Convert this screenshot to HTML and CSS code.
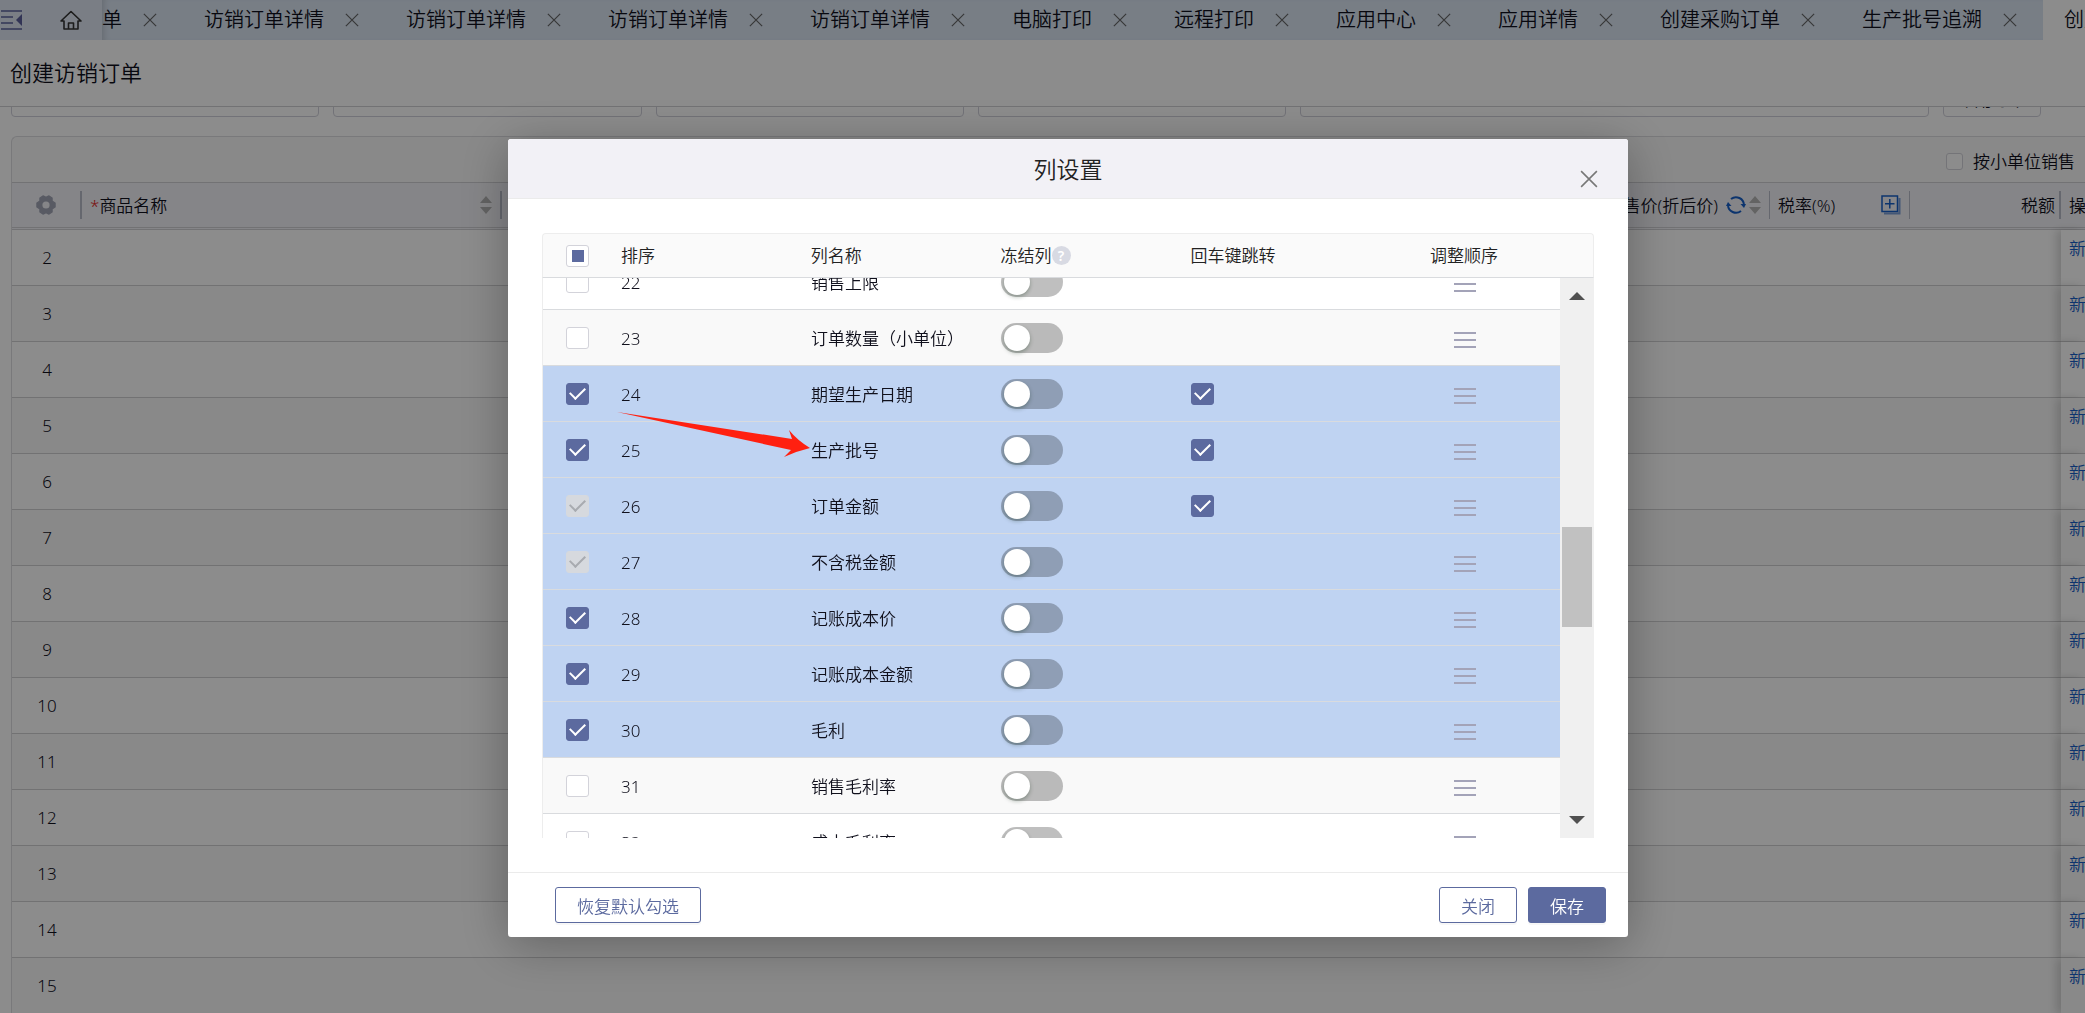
FILE: index.html
```html
<!DOCTYPE html>
<html lang="zh-CN">
<head>
    <meta charset="UTF-8">
    <meta name="viewport" content="width=device-width, initial-scale=1.0">
    <title>创建访销订单</title>
    <link rel="stylesheet" href="styles.css">
</head>
<body>
    <!-- shared icons -->
    <svg class="sprite" aria-hidden="true">
        <symbol id="icon-close" viewBox="0 0 16 16">
            <path d="M1 1L15 15M15 1L1 15" fill="none" stroke="currentColor" stroke-width="1.4"/>
        </symbol>
        <symbol id="icon-drag" viewBox="0 0 22 18">
            <path d="M0 2H22M0 9H22M0 16H22" fill="none" stroke="currentColor" stroke-width="2"/>
        </symbol>
        <symbol id="icon-sort" viewBox="0 0 12 18">
            <path d="M6 0L12 7H0zM6 18L0 11H12z" fill="currentColor"/>
        </symbol>
    </svg>

    <div class="tab-bar">
        <div class="tab-left">
            <button class="icon-btn" aria-label="收起菜单">
                <svg width="22" height="22" viewBox="0 0 22 22">
                    <path d="M1 2H22M1 8H13M1 14H13M1 20H22" fill="none" stroke="#5b609c" stroke-width="1.6"/>
                    <path d="M22 5V17L16 11z" fill="#5b609c"/>
                </svg>
            </button>
            <a href="#" class="home-link" aria-label="首页">
                <svg width="22" height="20" viewBox="0 0 22 20">
                    <path d="M1 11L11 1.500L21 11H18V19H4V11zM8.500 19V13H13.500V19" fill="none" stroke="#333" stroke-width="1.600" stroke-linejoin="round"/>
                </svg>
            </a>
        </div>
        <nav class="tabs">
            <div class="tab tab-cut"><a href="#">单</a><button class="tab-close" aria-label="关闭"><svg><use href="#icon-close"/></svg></button></div>
            <div class="tab"><a href="#">访销订单详情</a><button class="tab-close" aria-label="关闭"><svg><use href="#icon-close"/></svg></button></div>
            <div class="tab"><a href="#">访销订单详情</a><button class="tab-close" aria-label="关闭"><svg><use href="#icon-close"/></svg></button></div>
            <div class="tab"><a href="#">访销订单详情</a><button class="tab-close" aria-label="关闭"><svg><use href="#icon-close"/></svg></button></div>
            <div class="tab"><a href="#">访销订单详情</a><button class="tab-close" aria-label="关闭"><svg><use href="#icon-close"/></svg></button></div>
            <div class="tab"><a href="#">电脑打印</a><button class="tab-close" aria-label="关闭"><svg><use href="#icon-close"/></svg></button></div>
            <div class="tab"><a href="#">远程打印</a><button class="tab-close" aria-label="关闭"><svg><use href="#icon-close"/></svg></button></div>
            <div class="tab"><a href="#">应用中心</a><button class="tab-close" aria-label="关闭"><svg><use href="#icon-close"/></svg></button></div>
            <div class="tab"><a href="#">应用详情</a><button class="tab-close" aria-label="关闭"><svg><use href="#icon-close"/></svg></button></div>
            <div class="tab"><a href="#">创建采购订单</a><button class="tab-close" aria-label="关闭"><svg><use href="#icon-close"/></svg></button></div>
            <div class="tab"><a href="#">生产批号追溯</a><button class="tab-close" aria-label="关闭"><svg><use href="#icon-close"/></svg></button></div>
            <div class="tab active"><a href="#">创建访销订单</a></div>
        </nav>
    </div>

    <header class="page-header">
        <h1>创建访销订单</h1>
    </header>

    <main class="page-main">
        <div class="filters">
            <input type="text" aria-label="筛选一">
            <input type="text" aria-label="筛选二">
            <input type="text" aria-label="筛选三">
            <input type="text" aria-label="筛选四">
            <input type="text" class="wide" aria-label="备注">
            <button class="filter-btn">常用订单</button>
        </div>

        <section class="panel">
            <div class="panel-toolbar">
                <label class="unit-check"><input type="checkbox" class="check check-sm">按小单位销售</label>
            </div>
            <table class="goods-table">
                <colgroup>
                    <col class="col-index">
                    <col class="col-name">
                    <col>
                    <col class="col-rate">
                    <col class="col-tax">
                    <col class="col-action">
                </colgroup>
                <thead>
                    <tr>
                        <th>
                            <div class="th-inner center">
                                <svg width="20" height="20" viewBox="0 0 20 20">
                                    <path d="M7 1L10 2.500L13 1L16 3L16 6L19 8V12L16 14L16 17L13 19L10 17.500L7 19L4 17V14L1 12V8L4 6V3z" fill="#a1a5b5" stroke="#a1a5b5" stroke-width="1.500" stroke-linejoin="round"/>
                                    <circle cx="10" cy="10" r="3.600" fill="#f3f3f8"/>
                                </svg>
                            </div>
                        </th>
                        <th>
                            <div class="th-inner">
                                <span><i class="required">*</i>商品名称</span>
                                <svg class="sort"><use href="#icon-sort"/></svg>
                            </div>
                        </th>
                        <th>
                            <div class="th-inner thin end">
                                <span>售价(折后价)</span>
                                <svg class="refresh" width="20" height="20" viewBox="0 0 20 20">
                                    <path d="M5 4A8 8 0 0 1 18 10M15 16A8 8 0 0 1 2 10" fill="none" stroke="#1760c8" stroke-width="2"/>
                                    <path d="M14.500 9H20L18 13zM5.500 11H0L2 7z" fill="#1760c8"/>
                                </svg>
                                <svg class="sort"><use href="#icon-sort"/></svg>
                            </div>
                        </th>
                        <th>
                            <div class="th-inner thin">
                                <span>税率(%)</span>
                                <svg width="20" height="20" viewBox="0 0 20 20">
                                    <path d="M3 18.500H18.500V3" fill="none" stroke="#7c9fd8" stroke-width="2"/>
                                    <path d="M1 1H16.500V16.500H1zM8.800 4V13.500M4 8.800H13.500" fill="none" stroke="#1760c8" stroke-width="1.500"/>
                                </svg>
                            </div>
                        </th>
                        <th>
                            <div class="th-inner end tight"><span>税额</span></div>
                        </th>
                        <th><div class="th-inner last"><span>操作</span></div></th>
                    </tr>
                </thead>
                <tbody>
                    <tr><td>2</td><td></td><td></td><td></td><td></td><td class="action"><a href="#">新增</a></td></tr>
                    <tr><td>3</td><td></td><td></td><td></td><td></td><td class="action"><a href="#">新增</a></td></tr>
                    <tr><td>4</td><td></td><td></td><td></td><td></td><td class="action"><a href="#">新增</a></td></tr>
                    <tr><td>5</td><td></td><td></td><td></td><td></td><td class="action"><a href="#">新增</a></td></tr>
                    <tr><td>6</td><td></td><td></td><td></td><td></td><td class="action"><a href="#">新增</a></td></tr>
                    <tr><td>7</td><td></td><td></td><td></td><td></td><td class="action"><a href="#">新增</a></td></tr>
                    <tr><td>8</td><td></td><td></td><td></td><td></td><td class="action"><a href="#">新增</a></td></tr>
                    <tr><td>9</td><td></td><td></td><td></td><td></td><td class="action"><a href="#">新增</a></td></tr>
                    <tr><td>10</td><td></td><td></td><td></td><td></td><td class="action"><a href="#">新增</a></td></tr>
                    <tr><td>11</td><td></td><td></td><td></td><td></td><td class="action"><a href="#">新增</a></td></tr>
                    <tr><td>12</td><td></td><td></td><td></td><td></td><td class="action"><a href="#">新增</a></td></tr>
                    <tr><td>13</td><td></td><td></td><td></td><td></td><td class="action"><a href="#">新增</a></td></tr>
                    <tr><td>14</td><td></td><td></td><td></td><td></td><td class="action"><a href="#">新增</a></td></tr>
                    <tr><td>15</td><td></td><td></td><td></td><td></td><td class="action"><a href="#">新增</a></td></tr>
                </tbody>
            </table>
        </section>
    </main>

    <div class="overlay">
        <div class="modal" role="dialog" aria-labelledby="modalTitle">
            <div class="modal-header">
                <h2 id="modalTitle">列设置</h2>
                <button class="modal-close" aria-label="关闭"><svg><use href="#icon-close"/></svg></button>
            </div>

            <div class="modal-body">
                <table class="columns-table columns-head">
                    <colgroup><col class="col-check"><col><col><col><col><col></colgroup>
                    <thead>
                        <tr>
                            <th><input type="checkbox" class="check partial" aria-label="全选"></th>
                            <th>排序</th>
                            <th>列名称</th>
                            <th><span class="with-help">冻结列<span class="help">?</span></span></th>
                            <th>回车键跳转</th>
                            <th class="drag">调整顺序</th>
                        </tr>
                    </thead>
                </table>
                <div class="scroll-area">
                    <div class="scroll-view">
                        <table class="columns-table columns-list">
                            <colgroup><col class="col-check"><col><col><col><col><col></colgroup>
                            <tbody>
                                <tr>
                                    <td><input type="checkbox" class="check" aria-label="销售上限"></td>
                                    <td class="text">22</td>
                                    <td class="text">销售上限</td>
                                    <td><input type="checkbox" class="switch" aria-label="冻结列"></td>
                                    <td></td>
                                    <td class="text drag"><svg><use href="#icon-drag"/></svg></td>
                                </tr>
                                <tr>
                                    <td><input type="checkbox" class="check" aria-label="订单数量（小单位）"></td>
                                    <td class="text">23</td>
                                    <td class="text">订单数量（小单位）</td>
                                    <td><input type="checkbox" class="switch" aria-label="冻结列"></td>
                                    <td></td>
                                    <td class="text drag"><svg><use href="#icon-drag"/></svg></td>
                                </tr>
                                <tr class="selected">
                                    <td><input type="checkbox" class="check" aria-label="期望生产日期" checked></td>
                                    <td class="text">24</td>
                                    <td class="text">期望生产日期</td>
                                    <td><input type="checkbox" class="switch" aria-label="冻结列"></td>
                                    <td><input type="checkbox" class="check" aria-label="回车键跳转" checked></td>
                                    <td class="text drag"><svg><use href="#icon-drag"/></svg></td>
                                </tr>
                                <tr class="selected">
                                    <td><input type="checkbox" class="check" aria-label="生产批号" checked></td>
                                    <td class="text">25</td>
                                    <td class="text">生产批号</td>
                                    <td><input type="checkbox" class="switch" aria-label="冻结列"></td>
                                    <td><input type="checkbox" class="check" aria-label="回车键跳转" checked></td>
                                    <td class="text drag"><svg><use href="#icon-drag"/></svg></td>
                                </tr>
                                <tr class="selected">
                                    <td><input type="checkbox" class="check" aria-label="订单金额" checked disabled></td>
                                    <td class="text">26</td>
                                    <td class="text">订单金额</td>
                                    <td><input type="checkbox" class="switch" aria-label="冻结列"></td>
                                    <td><input type="checkbox" class="check" aria-label="回车键跳转" checked></td>
                                    <td class="text drag"><svg><use href="#icon-drag"/></svg></td>
                                </tr>
                                <tr class="selected">
                                    <td><input type="checkbox" class="check" aria-label="不含税金额" checked disabled></td>
                                    <td class="text">27</td>
                                    <td class="text">不含税金额</td>
                                    <td><input type="checkbox" class="switch" aria-label="冻结列"></td>
                                    <td></td>
                                    <td class="text drag"><svg><use href="#icon-drag"/></svg></td>
                                </tr>
                                <tr class="selected">
                                    <td><input type="checkbox" class="check" aria-label="记账成本价" checked></td>
                                    <td class="text">28</td>
                                    <td class="text">记账成本价</td>
                                    <td><input type="checkbox" class="switch" aria-label="冻结列"></td>
                                    <td></td>
                                    <td class="text drag"><svg><use href="#icon-drag"/></svg></td>
                                </tr>
                                <tr class="selected">
                                    <td><input type="checkbox" class="check" aria-label="记账成本金额" checked></td>
                                    <td class="text">29</td>
                                    <td class="text">记账成本金额</td>
                                    <td><input type="checkbox" class="switch" aria-label="冻结列"></td>
                                    <td></td>
                                    <td class="text drag"><svg><use href="#icon-drag"/></svg></td>
                                </tr>
                                <tr class="selected">
                                    <td><input type="checkbox" class="check" aria-label="毛利" checked></td>
                                    <td class="text">30</td>
                                    <td class="text">毛利</td>
                                    <td><input type="checkbox" class="switch" aria-label="冻结列"></td>
                                    <td></td>
                                    <td class="text drag"><svg><use href="#icon-drag"/></svg></td>
                                </tr>
                                <tr>
                                    <td><input type="checkbox" class="check" aria-label="销售毛利率"></td>
                                    <td class="text">31</td>
                                    <td class="text">销售毛利率</td>
                                    <td><input type="checkbox" class="switch" aria-label="冻结列"></td>
                                    <td></td>
                                    <td class="text drag"><svg><use href="#icon-drag"/></svg></td>
                                </tr>
                                <tr>
                                    <td><input type="checkbox" class="check" aria-label="成本毛利率"></td>
                                    <td class="text">32</td>
                                    <td class="text">成本毛利率</td>
                                    <td><input type="checkbox" class="switch" aria-label="冻结列"></td>
                                    <td></td>
                                    <td class="text drag"><svg><use href="#icon-drag"/></svg></td>
                                </tr>
                            </tbody>
                        </table>
                    </div>
                    <div class="scrollbar">
                        <span class="arrow-up"></span>
                        <div class="track"><div class="thumb"></div></div>
                        <span class="arrow-down"></span>
                    </div>
                </div>
            </div>

            <div class="modal-footer">
                <button class="btn btn-reset">恢复默认勾选</button>
                <button class="btn">关闭</button>
                <button class="btn btn-primary">保存</button>
            </div>

            <svg class="pointer" viewBox="0 0 194 46" aria-hidden="true">
                <path d="M0 0L175 27L172 18Q180 28 193 36Q180 39 167 45L174 38Z" fill="#ff2010"/>
            </svg>
        </div>
    </div>
</body>
</html>
```
FILE: styles.css
```css
* {
    margin: 0;
    padding: 0;
    box-sizing: border-box;
}

body {
    font-family: "Noto Sans", "Noto Sans CJK SC", sans-serif;
    font-size: 17px;
    font-weight: 350;
    line-height: 24px;
    color: #10101c;
    background: #fff;
    height: 100vh;
    overflow: hidden;
}

button,
input {
    font: inherit;
    color: inherit;
}

button {
    background: none;
    border: none;
    cursor: pointer;
}

a {
    color: inherit;
    text-decoration: none;
}

.sprite {
    display: none;
}

/* top tabs */
.tab-bar {
    display: flex;
    height: 40px;
    background: #dae5f3;
}

.tab-left {
    display: flex;
    align-items: center;
    gap: 38px;
    flex: 0 0 102px;
    background: #dfe6f2;
}

.icon-btn,
.home-link {
    display: flex;
}

.tabs {
    display: flex;
    flex: 1;
    overflow: hidden;
    font-size: 20px;
    box-shadow: inset 6px 0 6px -4px rgba(0, 0, 0, 0.15);
}

.tab {
    display: flex;
    align-items: center;
    flex: none;
    gap: 21px;
    padding: 0 26px 0 21px;
    white-space: nowrap;
}

.tab-cut {
    padding-left: 0;
}

.tab.active {
    background: #fff;
}

.tab-close {
    display: flex;
    color: #666;
}

.tab-close svg {
    width: 14px;
    height: 14px;
}

.page-header {
    display: flex;
    align-items: center;
    height: 67px;
    padding: 0 10px 2px;
    border-bottom: 1px solid #d0d0d4;
}

.page-header h1 {
    font-size: 22px;
    font-weight: 350;
}

.page-main {
    padding-left: 11px;
}

/* filter row is scrolled under the header */
.filters {
    display: flex;
    align-items: flex-end;
    gap: 14px;
    height: 10px;
    overflow: hidden;
    padding-right: 44px;
}

.filters input,
.filter-btn {
    height: 34px;
    border: 1px solid #d0d0da;
    border-radius: 4px;
    background: #fff;
}

.filters input {
    flex: 308 1 0;
    min-width: 0;
}

.filters .wide {
    flex-grow: 630;
}

.filter-btn {
    flex: 0 0 98px;
}

.panel {
    margin-top: 19px;
    border: 1px solid #dcdce0;
    border-right: none;
    border-radius: 6px 0 0 0;
    background: #f9f9f9;
}

.panel-toolbar {
    display: flex;
    justify-content: flex-end;
    align-items: center;
    height: 45px;
    padding: 4px 10px 0;
}

.unit-check {
    display: flex;
    align-items: center;
    gap: 10px;
}

.goods-table {
    width: 100%;
    table-layout: fixed;
    border-spacing: 0;
    background: #fff;
}

.col-index { width: 70px; }
.col-name { width: 420px; }
.col-rate { width: 140px; }
.col-tax { width: 151px; }
.col-action { width: 24px; }

.goods-table th {
    height: 48px;
    background: #f3f3f8;
    border-top: 1px solid #d0d0d4;
    border-bottom: 3px double #d0d0d4;
    font-weight: 350;
    overflow: hidden;
}

.th-inner {
    display: flex;
    align-items: center;
    justify-content: space-between;
    height: 28px;
    padding: 0 8px;
    border-right: 2px solid #b8bcc9;
    white-space: nowrap;
}

.th-inner span {
    padding-top: 2px;
}

.th-inner.thin {
    border-right-width: 1px;
}

.th-inner.center {
    justify-content: center;
}

.th-inner.end {
    justify-content: flex-end;
}

.th-inner.tight {
    padding-right: 4px;
}

.th-inner.last {
    border-right: none;
}

.refresh {
    margin: 0 3px 0 8px;
}

.sort {
    width: 12px;
    height: 18px;
    color: #b4b4b4;
}

.required {
    color: #e02020;
    font-style: normal;
}

.goods-table td {
    height: 56px;
    border-bottom: 1px solid #d0d0d2;
}

.goods-table td:first-child {
    text-align: center;
}

.goods-table tbody tr:nth-child(even) td {
    background: #f9f9f9;
}

.goods-table .action {
    padding: 7px 0 0 8px;
    vertical-align: top;
    white-space: nowrap;
    background: #fff;
    color: #1760c8;
    box-shadow: -5px 0 8px rgba(0, 0, 0, 0.15);
}

/* modal */
.overlay {
    position: fixed;
    inset: 0;
    display: flex;
    justify-content: center;
    align-items: flex-start;
    padding: 139px 0 76px 51px;
    background: rgba(0, 0, 0, 0.45);
}

.modal {
    position: relative;
    display: flex;
    flex-direction: column;
    width: 100%;
    max-width: 1120px;
    height: 100%;
    background: #fff;
    border-radius: 3px;
    box-shadow: 0 8px 50px rgba(0, 0, 0, 0.3);
}

.modal-header {
    display: flex;
    align-items: center;
    flex: 0 0 60px;
    padding: 0 30px 0 48px;
    background: #f2f1f6;
    border-bottom: 1px solid #ebebeb;
    border-radius: 3px 3px 0 0;
}

.modal-header h2 {
    flex: 1;
    text-align: center;
    font-size: 23px;
    font-weight: 350;
    color: #222;
}

.modal-close {
    display: flex;
    width: 18px;
    height: 18px;
    margin-top: 20px;
    color: #777;
}

.modal-close svg {
    width: 18px;
    height: 18px;
}

.modal-body {
    display: flex;
    flex-direction: column;
    flex: 1;
    min-height: 0;
    padding: 34px;
}

.columns-table {
    width: 100%;
    table-layout: fixed;
    border-spacing: 0;
}

.columns-head {
    flex: none;
    padding-right: 34px;
    background: #fafafa;
    border: 1px solid #ededed;
    border-bottom: 1px solid #d9dbde;
    border-radius: 4px 4px 0 0;
}

.columns-head th {
    height: 43px;
    font-weight: 350;
    text-align: left;
    color: #222;
}

.col-check {
    width: 67px;
}

.columns-table th,
.columns-table td {
    padding: 0 11px;
}

.columns-table .text {
    padding-top: 2px;
}

.columns-table th:first-child,
.columns-table td:first-child {
    padding: 0 0 0 23px;
}

.columns-table .drag {
    text-align: center;
}

.with-help {
    display: flex;
    align-items: center;
}

.help {
    width: 19px;
    height: 19px;
    border-radius: 50%;
    background: #d8dae3;
    color: #fff;
    font-size: 14px;
    font-weight: 600;
    line-height: 19px;
    text-align: center;
}

.scroll-area {
    display: flex;
    flex: 1;
    min-height: 0;
}

.scroll-view {
    flex: 1;
    overflow: hidden;
    border-left: 1px solid #ededed;
}

.columns-list {
    margin-top: -24px;
}

.columns-list td {
    height: 56px;
    border-bottom: 1px solid #d9dbde;
    white-space: nowrap;
}

.columns-list tr:nth-child(even) {
    background: #f9f9f9;
}

.columns-list tr.selected {
    background: #bfd3f2;
}

.drag svg {
    width: 22px;
    height: 18px;
    color: #a3a3b8;
    vertical-align: middle;
}

.scrollbar {
    display: flex;
    flex-direction: column;
    align-items: center;
    flex: 0 0 34px;
    padding: 14px 2px;
    background: #f0f0f0;
}

.arrow-up,
.arrow-down {
    border: 8px solid transparent;
}

.arrow-up {
    border-top: none;
    border-bottom-color: #505050;
}

.arrow-down {
    border-bottom: none;
    border-top-color: #505050;
}

.track {
    display: flex;
    flex-direction: column;
    flex: 1;
    width: 100%;
}

.track::before {
    content: "";
    flex: 227;
}

.track::after {
    content: "";
    flex: 189;
}

.thumb {
    flex: 100;
    background: #c1c1c1;
}

/* form controls */
.check {
    appearance: none;
    display: flex;
    align-items: center;
    justify-content: center;
    width: 23px;
    height: 22px;
    border: 1px solid #d3d3da;
    border-radius: 3px;
    background: #fff;
}

.check-sm {
    width: 17px;
    height: 17px;
}

.check:checked {
    background: #5c6a9f;
    border-color: #5c6a9f;
    color: #fff;
}

.check:checked::before {
    content: "";
    width: 7px;
    height: 13px;
    margin-top: -4px;
    border: solid currentColor;
    border-width: 0 2px 2px 0;
    transform: rotate(45deg);
}

.check:disabled {
    background: #d6d9de;
    border-color: #d6d9de;
    color: #a8abb0;
}

.partial::before {
    content: "";
    width: 12px;
    height: 12px;
    background: #5c6a9f;
}

.switch {
    appearance: none;
    display: block;
    width: 62px;
    height: 30px;
    padding: 2px 3px;
    border-radius: 15px;
    background: rgba(0, 0, 0, 0.25);
}

.switch::before {
    content: "";
    display: block;
    width: 26px;
    height: 26px;
    border-radius: 50%;
    background: #fff;
    box-shadow: 0 2px 4px rgba(0, 35, 11, 0.3);
}

.switch:checked {
    background: #5c6a9f;
}

.switch:checked::before {
    margin-left: auto;
}

.modal-footer {
    display: flex;
    align-items: center;
    gap: 11px;
    flex: 0 0 65px;
    padding: 0 22px 0 47px;
    border-top: 1px solid #ebebeb;
}

.btn {
    height: 36px;
    padding: 4px 21px 0;
    border: 1px solid #5c6a9f;
    border-radius: 3px;
    background: #fff;
    color: #5c6a9f;
    box-shadow: 0 2px 0 rgba(0, 0, 0, 0.03);
}

.btn-reset {
    margin-right: auto;
}

.btn-primary {
    background: #5c6a9f;
    color: #fff;
}

/* red pointer drawn over the 生产批号 row */
.pointer {
    position: absolute;
    top: 273px;
    left: 109px;
    width: 194px;
    height: 46px;
}
```
